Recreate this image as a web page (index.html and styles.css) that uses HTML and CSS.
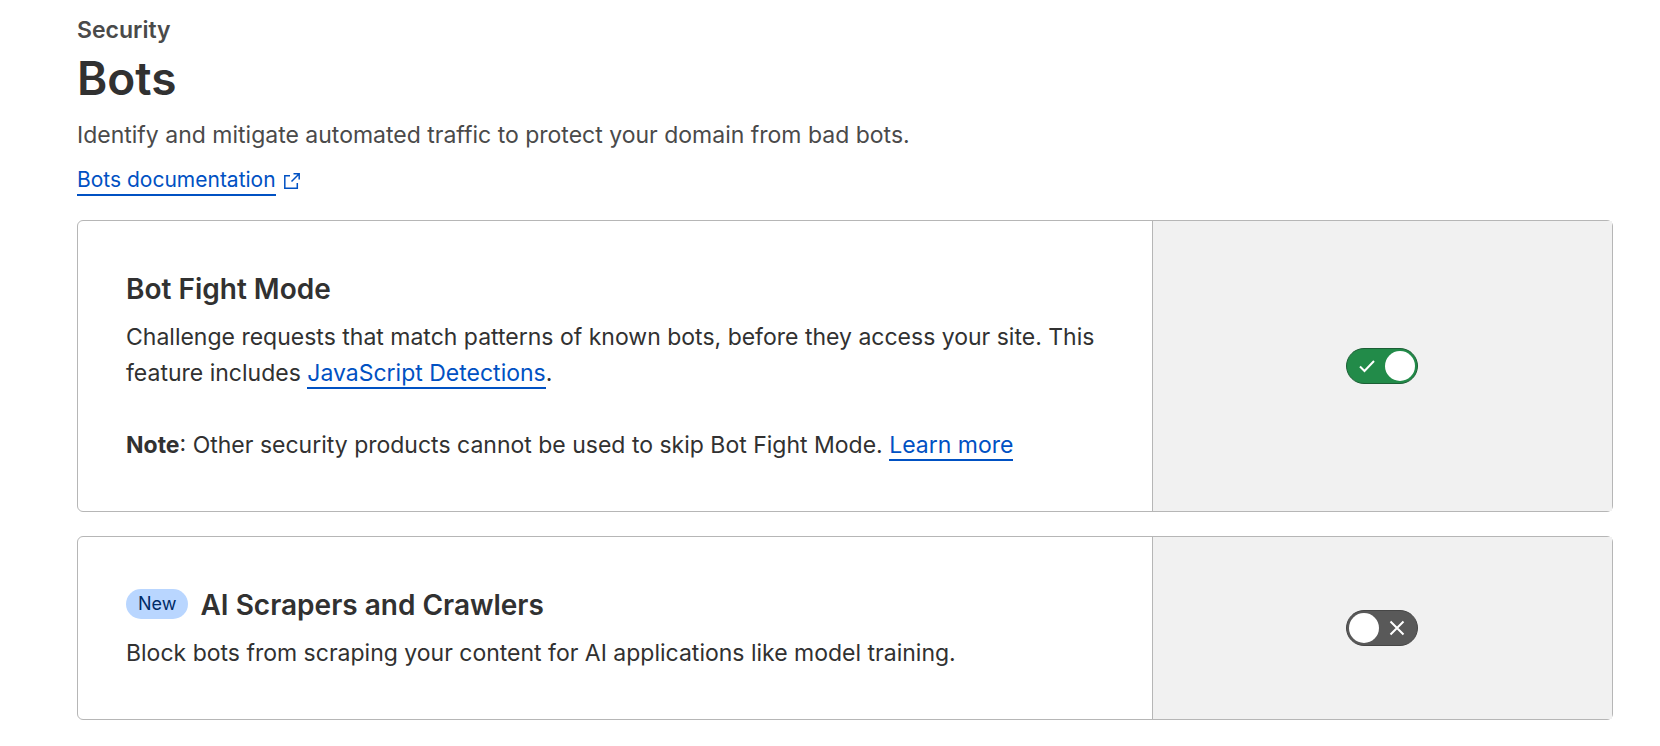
FILE: index.html
```html
<!DOCTYPE html>
<html lang="en">
<head>
    <meta charset="UTF-8">
    <meta name="viewport" content="width=device-width, initial-scale=1.0">
    <title>Bots</title>
    <link rel="stylesheet" href="styles.css">
</head>
<body>
    <main class="page">
        <header class="page-header">
            <p class="section-name">Security</p>
            <h1>Bots</h1>
            <p class="description">Identify and mitigate automated traffic to protect your domain from bad bots.</p>
            <p class="docs">
                <a class="link" href="#">Bots documentation</a>
                <svg class="external" viewBox="0 0 16 16" width="16" height="16" aria-hidden="true">
                    <path d="M6 2.7H.8v12.5h12.5V10M9.5.8h5.7v5.7M15 1L7.5 8.5"/>
                </svg>
            </p>
        </header>
        <section class="card">
            <div class="card-body">
                <h2 id="fight-mode">Bot Fight Mode</h2>
                <p>Challenge requests that match patterns of known bots, before they access your site. This feature includes <a class="link" href="#">JavaScript Detections</a>.</p>
                <p class="note"><strong>Note</strong>: Other security products cannot be used to skip Bot Fight Mode. <a class="link" href="#">Learn more</a></p>
            </div>
            <div class="card-control">
                <label class="toggle">
                    <input type="checkbox" aria-labelledby="fight-mode" checked>
                    <svg class="on" viewBox="0 0 16 16" width="16" height="16" aria-hidden="true"><path d="M1 8.5L5.5 13L15 3"/></svg>
                    <svg class="off" viewBox="0 0 16 16" width="16" height="16" aria-hidden="true"><path d="M1.5 1.5L14.5 14.5M14.5 1.5L1.5 14.5"/></svg>
                </label>
            </div>
        </section>
        <section class="card">
            <div class="card-body">
                <div class="card-title">
                    <span class="badge">New</span>
                    <h2 id="ai-scrapers">AI Scrapers and Crawlers</h2>
                </div>
                <p>Block bots from scraping your content for AI applications like model training.</p>
            </div>
            <div class="card-control">
                <label class="toggle">
                    <input type="checkbox" aria-labelledby="ai-scrapers">
                    <svg class="on" viewBox="0 0 16 16" width="16" height="16" aria-hidden="true"><path d="M1 8.5L5.5 13L15 3"/></svg>
                    <svg class="off" viewBox="0 0 16 16" width="16" height="16" aria-hidden="true"><path d="M1.5 1.5L14.5 14.5M14.5 1.5L1.5 14.5"/></svg>
                </label>
            </div>
        </section>
    </main>
</body>
</html>
```
FILE: styles.css
```css
* {
    box-sizing: border-box;
}

body {
    margin: 0;
    background-color: #fff;
    color: #313131;
    font-family: Inter, "Liberation Sans", sans-serif;
    font-size: 23px;
    line-height: 36px;
}

h1, h2, p {
    margin: 0;
}

.page {
    display: flex;
    flex-direction: column;
    gap: 24px;
    padding: 12px 47px 24px 77px;
}

.section-name {
    color: #4a4a4a;
    font-weight: 600;
}

h1 {
    font-size: 46px;
    font-weight: 600;
    line-height: 60px;
}

.description {
    margin-top: 9px;
    color: #4a4a4a;
}

.docs {
    display: flex;
    align-items: center;
    gap: 8px;
    margin-top: 13px;
    font-size: 21px;
    line-height: 28px;
}

.link {
    border-bottom: 2px solid #0051c3;
    color: #0051c3;
    text-decoration: none;
}

.external {
    fill: none;
    stroke: #0051c3;
    stroke-width: 1.5;
}

.card {
    display: flex;
    border: 1px solid #b6b6b6;
    border-radius: 6px;
}

.card-body {
    width: 70%;
    padding: 48px;
}

h2 {
    margin-bottom: 10px;
    font-size: 28px;
    font-weight: 600;
    line-height: 40px;
}

.card-title {
    display: flex;
    align-items: flex-start;
    gap: 12px;
}

.badge {
    margin-top: 4px;
    padding: 0 12px;
    border-radius: 15px;
    background-color: #b9d6ff;
    color: #002b66;
    font-size: 18px;
    line-height: 30px;
}

.note {
    margin-top: 36px;
}

.card-control {
    display: flex;
    align-items: center;
    justify-content: center;
    width: 30%;
    border-left: 1px solid #b6b6b6;
    background-color: #f1f1f1;
}

.toggle {
    display: flex;
    align-items: center;
    justify-content: space-between;
    width: 72px;
    height: 36px;
    padding: 0 12px;
    border: 1px solid #464646;
    border-radius: 18px;
    background-color: #595959;
    cursor: pointer;
}

.toggle input {
    width: 30px;
    height: 30px;
    margin: 0 0 0 -10px;
    border-radius: 50%;
    background-color: #fff;
    appearance: none;
    cursor: pointer;
}

.toggle svg {
    fill: none;
    stroke: #fff;
    stroke-width: 2;
}

.toggle .on {
    display: none;
}

.toggle:has(input:checked) {
    flex-direction: row-reverse;
    border-color: #1c5f35;
    background-color: #228b49;
}

.toggle input:checked {
    margin: 0 -10px 0 0;
}

.toggle input:checked ~ .on {
    display: block;
}

.toggle input:checked ~ .off {
    display: none;
}
```
